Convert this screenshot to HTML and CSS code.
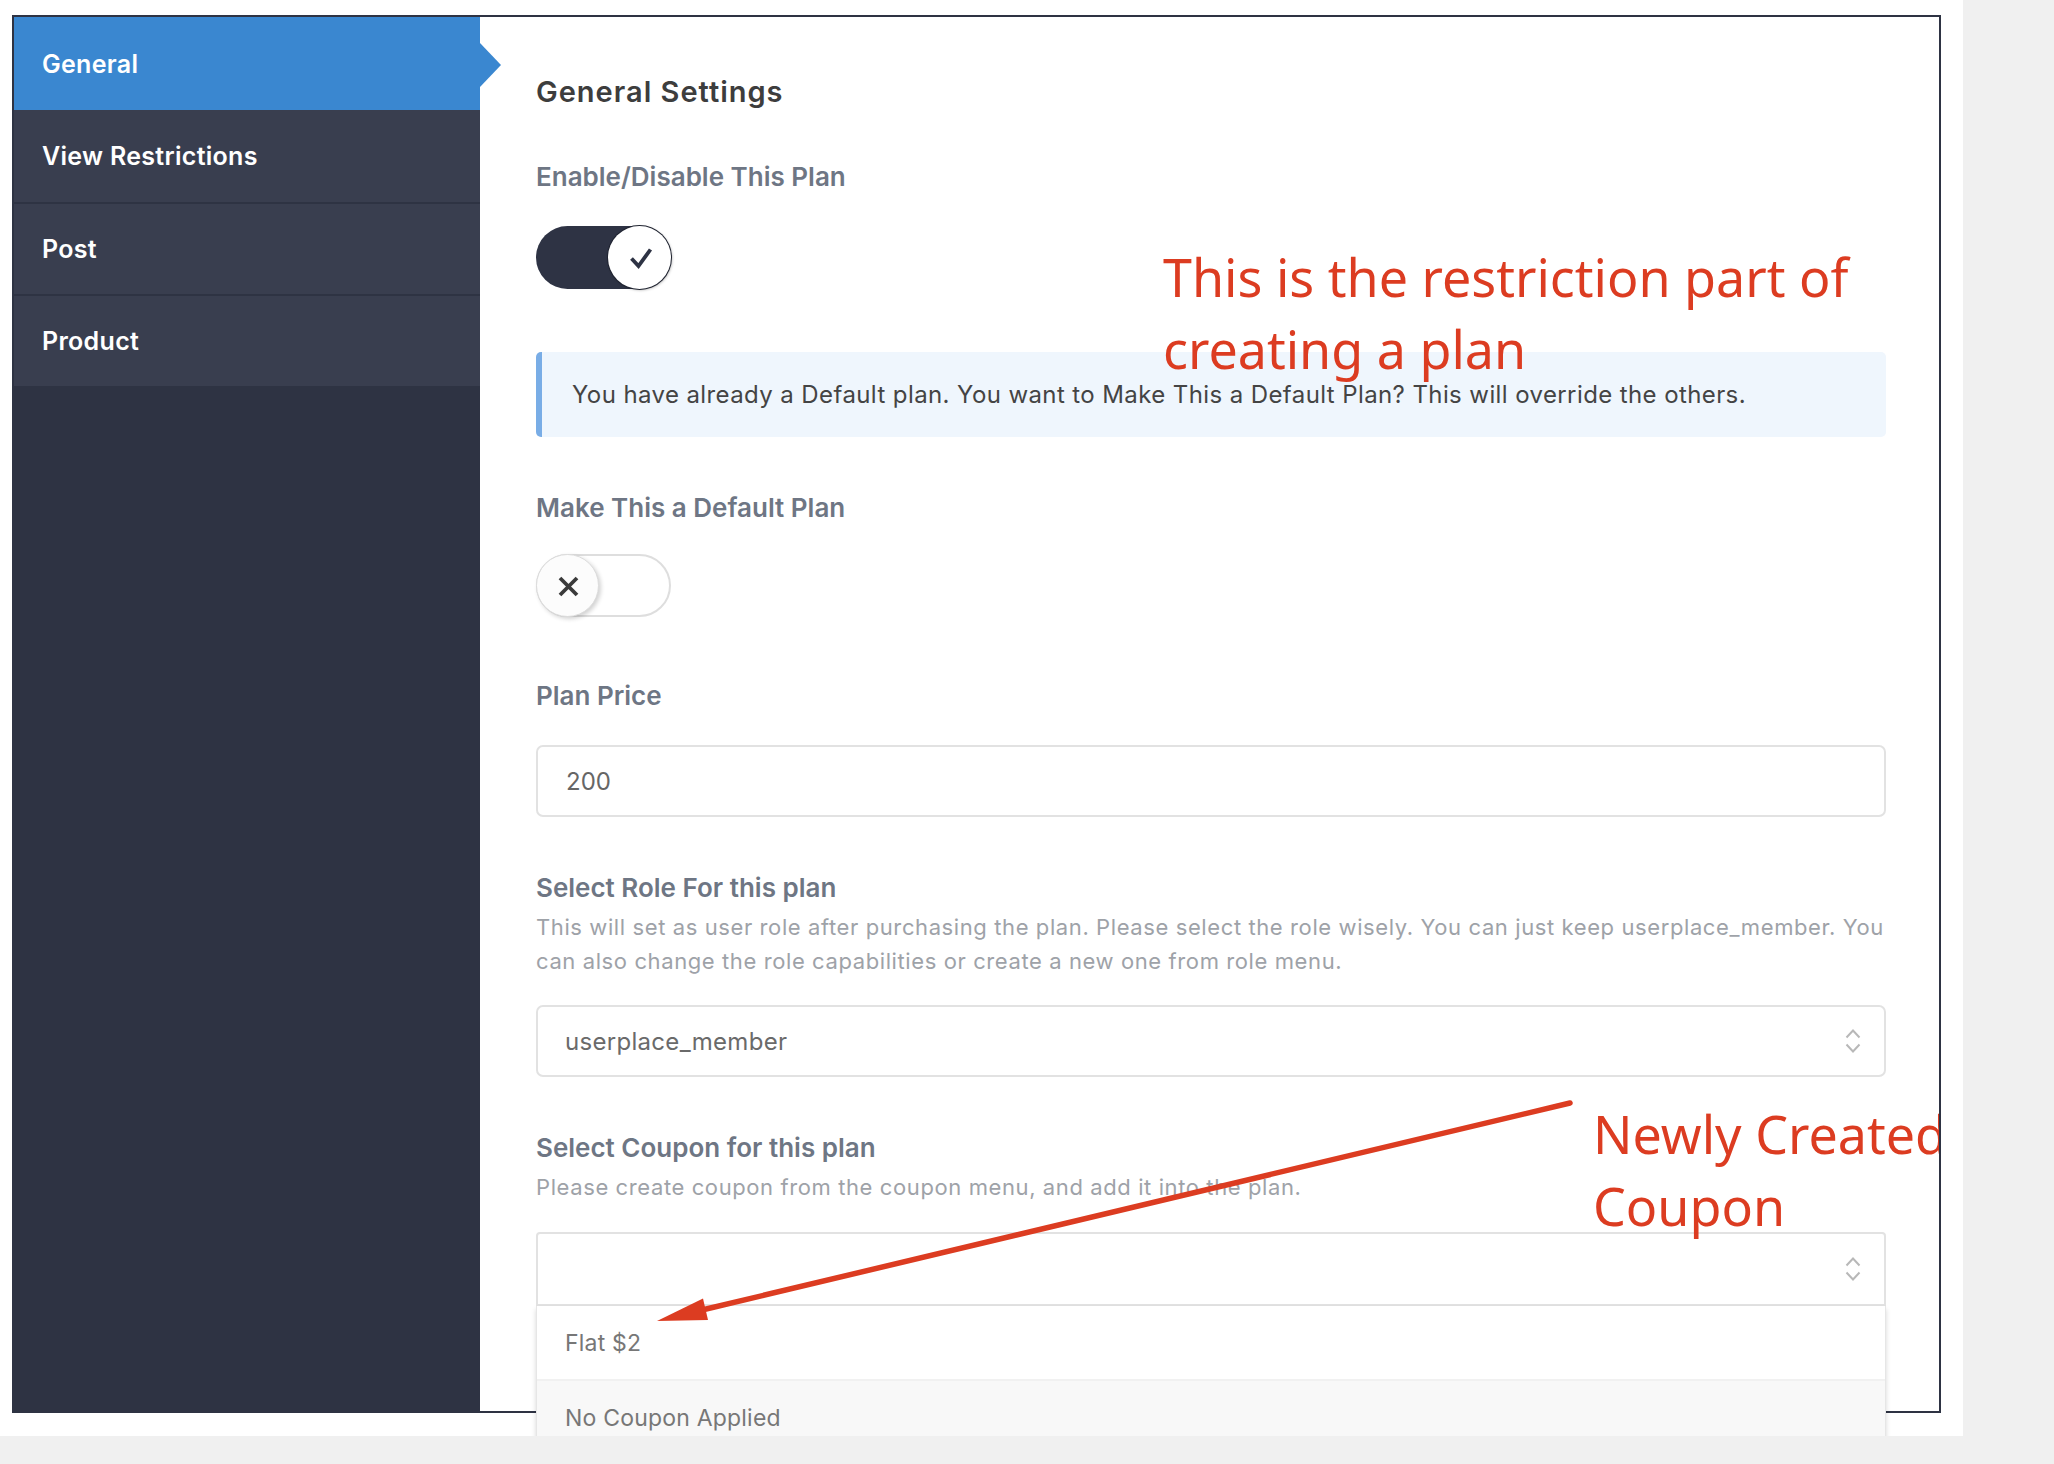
FILE: index.html
```html
<!DOCTYPE html>
<html lang="en">
<head>
<meta charset="utf-8">
<title>General Settings</title>
<link rel="stylesheet" href="styles.css">
</head>
<body>
<div class="page">
  <div class="frame">
    <nav class="sidebar">
      <div class="nav-item active">General</div>
      <div class="nav-item nav-second">View Restrictions</div>
      <div class="nav-item">Post</div>
      <div class="nav-item">Product</div>
    </nav>
    <main class="content">
      <h2 class="title">General Settings</h2>

      <div class="label label-first">Enable/Disable This Plan</div>
      <div class="toggle toggle-on">
        <span class="knob">
          <svg viewBox="0 0 63 63" width="63" height="63"><path d="M23.5 32.5 L30.5 40 L42.5 23.5" fill="none" stroke="#2e3344" stroke-width="3.8" stroke-linejoin="miter"/></svg>
        </span>
      </div>

      <div class="notice">You have already a Default plan. You want to Make This a Default Plan? This will override the others.</div>

      <div class="label label-after-notice">Make This a Default Plan</div>
      <div class="toggle toggle-off">
        <span class="knob">
          <svg viewBox="0 0 63 63" width="63" height="63"><path d="M23 23 L40 40 M40 23 L23 40" fill="none" stroke="#3a3a3a" stroke-width="3.8"/></svg>
        </span>
      </div>

      <div class="label label-after-toggle">Plan Price</div>
      <div class="input">200</div>

      <div class="label label-after-field">Select Role For this plan</div>
      <p class="desc"><span class="desc-line">This will set as user role after purchasing the plan. Please select the role wisely. You can just keep userplace_member. You</span><span class="desc-line">can also change the role capabilities or create a new one from role menu.</span></p>
      <div class="select">
        <span class="select-value">userplace_member</span>
        <svg class="chevrons" viewBox="0 0 16 26" width="16" height="26"><path d="M1.5 9.5 L8 2.5 L14.5 9.5 M1.5 16.5 L8 23.5 L14.5 16.5" fill="none" stroke="#b8b8b8" stroke-width="2"/></svg>
      </div>

      <div class="label label-after-field">Select Coupon for this plan</div>
      <p class="desc">Please create coupon from the coupon menu, and add it into the plan.</p>
      <div class="select-wrap">
        <div class="select select-open">
          <span class="select-value"></span>
          <svg class="chevrons" viewBox="0 0 16 26" width="16" height="26"><path d="M1.5 9.5 L8 2.5 L14.5 9.5 M1.5 16.5 L8 23.5 L14.5 16.5" fill="none" stroke="#b8b8b8" stroke-width="2"/></svg>
        </div>
        <ul class="dropdown">
          <li class="option">Flat $2</li>
          <li class="option option-hover">No Coupon Applied</li>
        </ul>
      </div>
    </main>

    <div class="annotations">
      <p class="note note-top">This is the restriction part of<br>creating a plan</p>
      <p class="note note-bottom">Newly Created<br>Coupon</p>
      <svg class="arrow" viewBox="0 0 1925 1394" width="1925" height="1394">
        <line x1="1556" y1="1086" x2="688" y2="1293" stroke="#dc3c21" stroke-width="5.5" stroke-linecap="round"/>
        <polygon points="643,1304 689,1281.5 694,1303" fill="#dc3c21"/>
      </svg>
    </div>
  </div>
</div>
</body>
</html>
```

FILE: styles.css
```css
* { box-sizing: border-box; }

body {
  margin: 0;
  background: #f0f0f0;
  font-family: Inter, Roboto, "Noto Sans", Arial, sans-serif;
}

.page {
  width: 1963px;
  height: 1436px;
  background: #ffffff;
  padding: 15px 0 0 12px;
}

.frame {
  position: relative;
  display: flex;
  width: 1929px;
  height: 1398px;
  border: 2px solid #2e3343;
}

/* Sidebar */
.sidebar {
  flex: none;
  width: 466px;
  background: #2e3343;
}

.nav-item {
  display: flex;
  align-items: center;
  height: 92px;
  padding-left: 28px;
  border-bottom: 2px solid #2e3343;
  background: #393e4f;
  color: #ffffff;
  font-size: 25px;
  font-weight: 600;
  letter-spacing: 0.3px;
}

.nav-item.nav-second { height: 94px; }

.nav-item.active {
  position: relative;
  height: 93px;
  border-bottom: 0;
  background: #3a87d0;
}

.nav-item.active::after {
  content: "";
  position: absolute;
  left: 100%;
  top: 26px;
  border-left: 21px solid #3a87d0;
  border-top: 22px solid transparent;
  border-bottom: 22px solid transparent;
}

/* Content */
.content {
  flex: 1;
  min-width: 0;
  padding: 58px 53px 0 56px;
  color: #444;
}

.title {
  margin: 0;
  font-size: 29px;
  line-height: 34px;
  font-weight: 600;
  letter-spacing: 1px;
  color: #3d3d3d;
}

.label {
  font-size: 26px;
  line-height: 30px;
  font-weight: 600;
  color: #6e7684;
}

.label-first { margin-top: 53px; }
.label-after-notice { margin-top: 56px; }
.label-after-toggle { margin-top: 64px; }
.label-after-field { margin-top: 56px; }

.toggle {
  position: relative;
  display: flex;
  width: 135px;
  height: 63px;
  margin-top: 34px;
  border-radius: 32px;
}

.toggle-on {
  background: #2e3344;
  justify-content: flex-end;
}

.toggle-off {
  margin-top: 31px;
  background: #ffffff;
  border: 2px solid #dedede;
}

.knob {
  display: block;
  width: 63px;
  height: 63px;
  border-radius: 50%;
  background: #ffffff;
}

.knob svg { display: block; }

.toggle-on .knob {
  box-shadow: 0 0 0 1px #1f2330, 1px 1px 3px rgba(0, 0, 0, 0.35);
}

.toggle-off .knob {
  margin: -2px 0 0 -2px;
  background: #fcfcfc;
  border: 1px solid #dcdcdc;
  box-shadow: 2px 2px 4px rgba(0, 0, 0, 0.18);
}

.notice {
  display: flex;
  align-items: center;
  height: 85px;
  margin-top: 63px;
  padding-left: 30px;
  border-left: 6px solid #79ade6;
  border-radius: 5px;
  background: #eff6fd;
  font-size: 24px;
  letter-spacing: 0.4px;
  color: #444;
}

.input {
  display: flex;
  align-items: center;
  height: 72px;
  margin-top: 34px;
  padding-left: 28px;
  border: 2px solid #e2e2e2;
  border-radius: 7px;
  font-size: 24px;
  color: #666;
}

.desc {
  margin: 7px 0 0;
  font-size: 22px;
  line-height: 34px;
  letter-spacing: 0.6px;
  color: #9ea2a8;
}

.desc-line {
  display: block;
  white-space: nowrap;
}

.select {
  display: flex;
  align-items: center;
  justify-content: space-between;
  height: 72px;
  margin-top: 27px;
  padding: 0 23px 0 27px;
  border: 2px solid #e2e2e2;
  border-radius: 7px;
  font-size: 24px;
  letter-spacing: 0.3px;
  color: #6a6a6a;
}

.chevrons { display: block; }

.select-wrap {
  position: relative;
  margin-top: 28px;
}

.select-open {
  height: 74px;
  margin-top: 0;
  border-radius: 4px 4px 0 0;
}

.dropdown {
  position: absolute;
  left: 0;
  right: 0;
  top: 100%;
  z-index: 2;
  margin: 0;
  padding: 0;
  list-style: none;
  background: #ffffff;
  border: 1px solid #e6e6e6;
  border-top: 0;
  border-radius: 0 0 7px 7px;
  box-shadow: 0 3px 5px rgba(0, 0, 0, 0.16);
  overflow: hidden;
}

.option {
  display: flex;
  align-items: center;
  height: 73px;
  padding-left: 28px;
  font-size: 23px;
  letter-spacing: 0.2px;
  color: #777;
}

.option-hover {
  height: 68px;
  padding-top: 8px;
  background: #f8f8f8;
  border-top: 2px solid #f1f1f1;
}

/* Annotations */
.annotations {
  position: absolute;
  inset: 0;
  z-index: 5;
  overflow: hidden;
  pointer-events: none;
}

.note {
  position: absolute;
  margin: 0;
  font-family: "Noto Sans", "Open Sans", sans-serif;
  font-size: 52px;
  line-height: 72px;
  color: #dc3c21;
  white-space: nowrap;
}

.note-top { left: 1149px; top: 224px; }
.note-bottom { left: 1579px; top: 1081px; }

.arrow {
  position: absolute;
  left: 0;
  top: 0;
}
```
